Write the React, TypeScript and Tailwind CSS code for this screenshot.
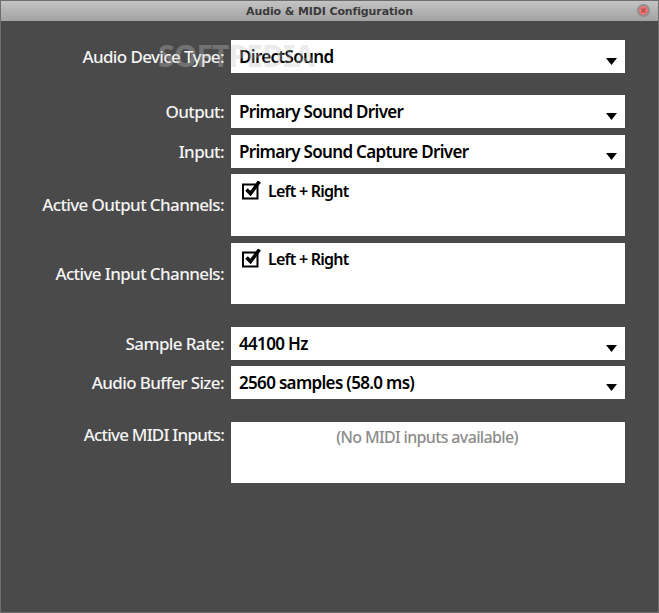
const font = { fontFamily: '"Noto Sans", sans-serif' };

function Arrow() {
  return (
    <svg width="11" height="7" viewBox="0 0 11 7" className="absolute right-[8px] top-[18px]">
      <path d="M0 0H11L5.5 7Z" fill="#000" />
    </svg>
  );
}

function Label({ children, top, tight }: { children: React.ReactNode; top?: boolean; tight?: boolean }) {
  return (
    <div className={`w-[223px] shrink-0 text-right text-[17px] leading-[22px] font-medium text-[#f4f4f4] ${tight ? "tracking-[-0.8px]" : "tracking-[-0.62px]"} ${top ? "pt-[2px]" : ""}`}>
      {children}
    </div>
  );
}

function Combo({ label, value, className }: { label: string; value: string; className: string }) {
  return (
    <div className={`flex items-center gap-[7px] h-[33px] ${className}`}>
      <Label>{label}</Label>
      <div className="relative flex-1 h-full bg-white flex items-center pl-[8px] font-semibold text-black leading-[22px] text-[17px] tracking-[-0.68px]">
        {value}
        <Arrow />
      </div>
    </div>
  );
}

function Check() {
  return (
    <svg width="21" height="20" viewBox="0 0 21 20" className="shrink-0 mt-[2px]">
      <path d="M1 3.5H15.5V17.5H1Z" fill="none" stroke="#000" strokeWidth="2" />
      <path d="M4.5 8.5L8.5 12.5L17.5 0.5" fill="none" stroke="#000" strokeWidth="3.6" />
    </svg>
  );
}

function ChannelList({ label, h, className, pad }: { label: string; h: string; className: string; pad: string }) {
  return (
    <div className={`flex items-center gap-[7px] ${h} ${className}`}>
      <Label>{label}</Label>
      <div className={`flex-1 h-full bg-white flex items-start pl-[11px] ${pad}`}>
        <Check />
        <span className="ml-[5px] text-[16px] leading-[24px] font-semibold tracking-[-0.75px] text-black">Left + Right</span>
      </div>
    </div>
  );
}

export default function App() {
  return (
    <div style={font} className="relative w-[659px] h-[613px] bg-[#4a4a4a] border border-[#6e6e6e] overflow-hidden flex flex-col">
      <div className="relative h-[20px] shrink-0 bg-gradient-to-b from-[#c4c4c4] to-[#a2a2a2] flex items-center justify-center pt-[2px]">
        <span className="text-[11px] font-bold tracking-[-0.12px] text-[#3a3a3a]" style={{ fontFamily: '"DejaVu Sans", sans-serif' }}>Audio &amp; MIDI Configuration</span>
        <div className="absolute right-[8px] top-[3px] w-[13px] h-[13px] rounded-full bg-[#ee7474] border-2 border-[#8e8e8e] flex items-center justify-center">
          <svg width="5" height="5" viewBox="0 0 5 5"><path d="M0.5 0.5L4.5 4.5M4.5 0.5L0.5 4.5" stroke="#a85050" strokeWidth="1.2" /></svg>
        </div>
      </div>
      <div className="pr-[33px] pt-[19px] flex flex-col">
        <Combo label="Audio Device Type:" value="DirectSound" className="" />
        <Combo label="Output:" value="Primary Sound Driver" className="mt-[22px]" />
        <Combo label="Input:" value="Primary Sound Capture Driver" className="mt-[7px]" />
        <ChannelList label="Active Output Channels:" h="h-[62px]" className="mt-[6px]" pad="pt-[5px]" />
        <ChannelList label="Active Input Channels:" h="h-[61px]" className="mt-[7px]" pad="pt-[4px]" />
        <Combo label="Sample Rate:" value="44100 Hz" className="mt-[23px]" />
        <Combo label="Audio Buffer Size:" value="2560 samples (58.0 ms)" className="mt-[6px]" />
        <div className="flex items-start gap-[7px] h-[61px] mt-[23px]">
          <Label top tight>Active MIDI Inputs:</Label>
          <div className="flex-1 h-full bg-white text-center pt-[3px] pr-[2px] text-[16px] leading-[24px] font-medium tracking-[-0.65px] text-[#8c8c8c]">
            (No MIDI inputs available)
          </div>
        </div>
      </div>
      <div className="absolute left-[157px] top-[37px] text-[30px] leading-[36px] font-bold tracking-[-0.9px] text-[#c4c4c4] opacity-[0.33] pointer-events-none">
        SOFTPEDIA
      </div>
    </div>
  );
}
